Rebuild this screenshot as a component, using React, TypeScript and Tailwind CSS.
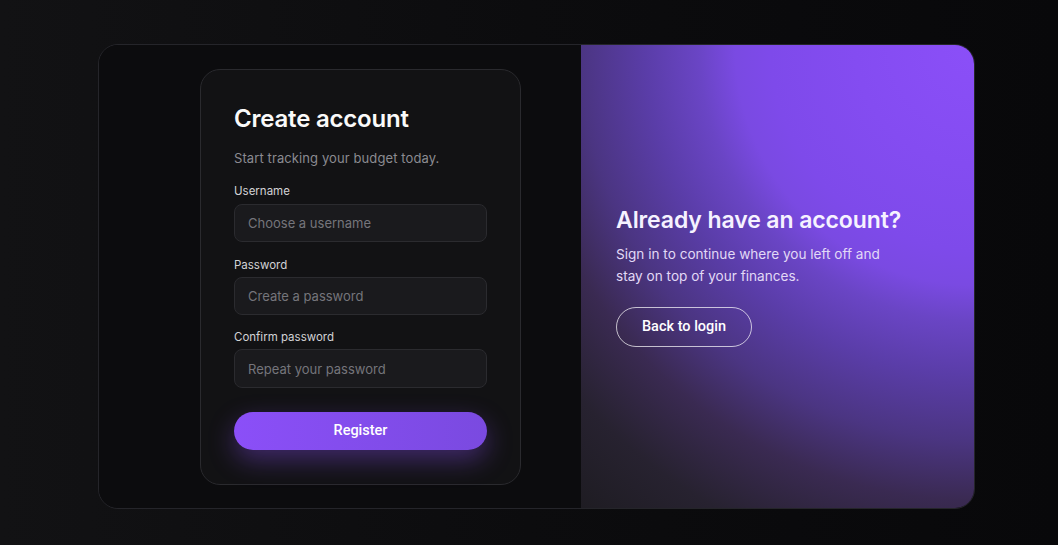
import React from "react";

export default function App() {
  const inputCls =
    "block w-full h-[38px] rounded-[8px] border border-[#2b2b2f] bg-[#1a1a1d] px-[13px] text-[13px] text-[#e5e5e8] placeholder:text-[#75757b] outline-none";
  const labelCls = "block text-[11.5px] leading-[16px] text-[#d2d2d6]";
  return (
    <div
      className="w-full h-[545px] bg-[linear-gradient(90deg,#121214_0%,#0c0c0e_50%,#08080a_100%)] pl-[98px] pt-[44px]"
      style={{ fontFamily: "Inter, 'Noto Sans', sans-serif" }}
    >
      <div className="w-[877px] h-[465px] rounded-[20px] border border-[#25252a] overflow-hidden grid grid-cols-[482px_394px]">
        {/* Left */}
        <div className="bg-[#0c0c0e] pt-[24px] pl-[101px]">
          <div className="w-[321px] h-[416px] rounded-[20px] border border-[#2a2a2e] bg-[#121214] px-[33px] pt-[33px]">
            <h1 className="text-[24px] leading-[32px] font-semibold text-[#fafafa] tracking-[-0.2px]">
              Create account
            </h1>
            <p className="mt-[13px] text-[13px] leading-[20px] text-[#8b8b91] tracking-[0.1px]">
              Start tracking your budget today.
            </p>
            <label className={labelCls + " mt-[15px]"}>Username</label>
            <input className={inputCls + " mt-[5px]"} placeholder="Choose a username" />
            <label className={labelCls + " mt-[15px]"}>Password</label>
            <input className={inputCls + " mt-[4px]"} placeholder="Create a password" type="password" />
            <label className={labelCls + " mt-[14px]"}>Confirm password</label>
            <input className={inputCls + " mt-[4px] h-[39px]"} placeholder="Repeat your password" type="password" />
            <button
              className="mt-[24px] w-full h-[38px] rounded-full bg-[linear-gradient(90deg,#8b4ff8,#7a4ae0)] text-white text-[14.5px] font-medium shadow-[0_10px_26px_rgba(139,79,248,0.38)]"
              style={{ fontFamily: "Roboto, 'Noto Sans', sans-serif" }}
            >
              Register
            </button>
          </div>
        </div>
        {/* Right */}
        <div className="bg-[radial-gradient(circle_at_100%_0%,#8b4ff8_0px,#844cf1_120px,#7e4aea_205px,#7a4ae2_240px,#6a45c5_276px,#5a3da8_330px,#4b3582_395px,#3a2a52_455px,#272230_530px,#1e1c22_610px)] pl-[35px] flex flex-col justify-center">
          <h2 className="text-[23px] leading-[28px] font-semibold text-[#f6f2ff] tracking-[-0.1px]">
            Already have an account?
          </h2>
          <p className="mt-[9px] w-[282px] text-[13.6px] leading-[22px] text-[#e2d9f6]">
            Sign in to continue where you left off and stay on top of your finances.
          </p>
          <div className="mt-[20px]">
            <button
              className="w-[136px] h-[40px] rounded-full border border-white/70 text-white text-[14.5px] font-medium"
              style={{ fontFamily: "Roboto, 'Noto Sans', sans-serif" }}
            >
              Back to login
            </button>
          </div>
        </div>
      </div>
    </div>
  );
}
